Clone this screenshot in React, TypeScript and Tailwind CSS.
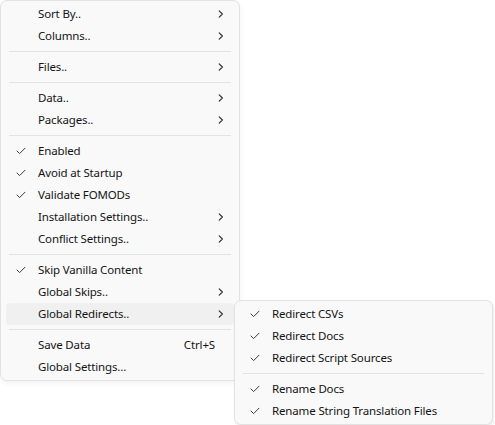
type Item =
  | { kind: 'sep' }
  | {
      kind: 'item'
      label: string
      checked?: boolean
      sub?: boolean
      shortcut?: string
      active?: boolean
    }

const MAIN: Item[] = [
  { kind: 'item', label: 'Sort By..', sub: true },
  { kind: 'item', label: 'Columns..', sub: true },
  { kind: 'sep' },
  { kind: 'item', label: 'Files..', sub: true },
  { kind: 'sep' },
  { kind: 'item', label: 'Data..', sub: true },
  { kind: 'item', label: 'Packages..', sub: true },
  { kind: 'sep' },
  { kind: 'item', label: 'Enabled', checked: true },
  { kind: 'item', label: 'Avoid at Startup', checked: true },
  { kind: 'item', label: 'Validate FOMODs', checked: true },
  { kind: 'item', label: 'Installation Settings..', sub: true },
  { kind: 'item', label: 'Conflict Settings..', sub: true },
  { kind: 'sep' },
  { kind: 'item', label: 'Skip Vanilla Content', checked: true },
  { kind: 'item', label: 'Global Skips..', sub: true },
  { kind: 'item', label: 'Global Redirects..', sub: true, active: true },
  { kind: 'sep' },
  { kind: 'item', label: 'Save Data', shortcut: 'Ctrl+S' },
  { kind: 'item', label: 'Global Settings...' },
]

const REDIRECTS: Item[] = [
  { kind: 'item', label: 'Redirect CSVs', checked: true },
  { kind: 'item', label: 'Redirect Docs', checked: true },
  { kind: 'item', label: 'Redirect Script Sources', checked: true },
  { kind: 'sep' },
  { kind: 'item', label: 'Rename Docs', checked: true },
  { kind: 'item', label: 'Rename String Translation Files', checked: true },
]

function Check() {
  return (
    <svg width="10" height="8" viewBox="0 0 10 8" className="text-[#3a3a3a]">
      <polyline
        points="1,4 3.6,6.6 9,1.2"
        fill="none"
        stroke="currentColor"
        strokeWidth="1"
        strokeLinecap="round"
        strokeLinejoin="round"
      />
    </svg>
  )
}

function Chevron() {
  return (
    <svg width="6" height="8" viewBox="0 0 6 8" className="text-[#2a2a2a]">
      <polyline
        points="1.2,0.8 4.4,4 1.2,7.2"
        fill="none"
        stroke="currentColor"
        strokeWidth="1.1"
        strokeLinecap="round"
        strokeLinejoin="round"
      />
    </svg>
  )
}

function MenuList({ items }: { items: Item[] }) {
  return (
    <>
      {items.map((it, i) =>
        it.kind === 'sep' ? (
          <div key={i} className="h-[9px] flex items-center px-[8px]">
            <div className="h-px w-full bg-[#e3e3e3]" />
          </div>
        ) : (
          <div
            key={i}
            className={`h-[22px] mx-[5px] rounded-[4px] flex items-center ${
              it.active ? 'bg-[#f0f0f0]' : ''
            }`}
          >
            <span className="w-[32px] shrink-0 flex justify-center pr-[2px]">
              {it.checked && <Check />}
            </span>
            <span className="flex-1 whitespace-nowrap">{it.label}</span>
            {it.shortcut && <span className="pr-[19px]">{it.shortcut}</span>}
            {it.sub && (
              <span className="pr-[10px] flex items-center">
                <Chevron />
              </span>
            )}
          </div>
        ),
      )}
    </>
  )
}

export default function App() {
  return (
    <div
      className="relative w-[495px] h-[425px] bg-white text-[11.5px] tracking-[-0.15px] text-[#141414]"
      style={{ fontFamily: '"Noto Sans", "Open Sans", sans-serif' }}
    >
      {/* Main context menu */}
      <div className="w-[240px] bg-[#f9f9f9] border border-[#e2e2e2] rounded-[7px] py-[2px] shadow-[0_2px_6px_rgba(0,0,0,0.06)]">
        <MenuList items={MAIN} />
      </div>

      {/* Global Redirects submenu */}
      <div className="absolute left-[234px] top-[300px] w-[259px] bg-[#f9f9f9] border border-[#e2e2e2] rounded-[7px] py-[2px] shadow-[1px_2px_3px_rgba(0,0,0,0.08)]">
        <MenuList items={REDIRECTS} />
      </div>
    </div>
  )
}
